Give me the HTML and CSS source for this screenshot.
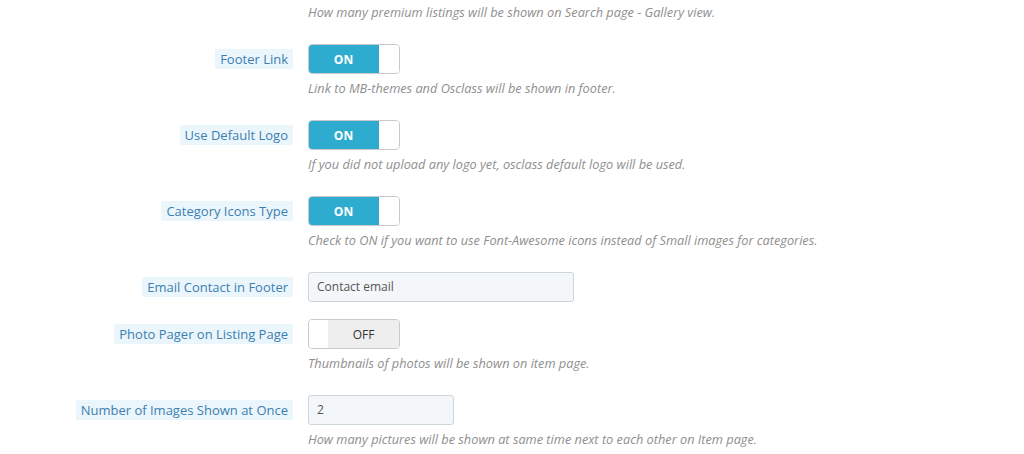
FILE: index.html
```html
<!DOCTYPE html>
<html>
<head>
<meta charset="utf-8">
<link rel="stylesheet" href="styles.css">
</head>
<body>
<div class="form">
  <div class="row row-top">
    <div class="label-col"></div>
    <div class="field"><div class="help">How many premium listings will be shown on Search page - Gallery view.</div></div>
  </div>
  <div class="row">
    <div class="label-col"><span class="label">Footer Link</span></div>
    <div class="field">
      <div class="toggle on"><span class="tg-on">ON</span><span class="tg-knob"></span></div>
      <div class="help">Link to MB-themes and Osclass will be shown in footer.</div>
    </div>
  </div>
  <div class="row">
    <div class="label-col"><span class="label">Use Default Logo</span></div>
    <div class="field">
      <div class="toggle on"><span class="tg-on">ON</span><span class="tg-knob"></span></div>
      <div class="help">If you did not upload any logo yet, osclass default logo will be used.</div>
    </div>
  </div>
  <div class="row">
    <div class="label-col"><span class="label">Category Icons Type</span></div>
    <div class="field">
      <div class="toggle on"><span class="tg-on">ON</span><span class="tg-knob"></span></div>
      <div class="help">Check to ON if you want to use Font-Awesome icons instead of Small images for categories.</div>
    </div>
  </div>
  <div class="row">
    <div class="label-col"><span class="label">Email Contact in Footer</span></div>
    <div class="field">
      <div class="input input-wide">Contact email</div>
    </div>
  </div>
  <div class="row">
    <div class="label-col"><span class="label">Photo Pager on Listing Page</span></div>
    <div class="field">
      <div class="toggle off"><span class="tg-knob"></span><span class="tg-off">OFF</span></div>
      <div class="help">Thumbnails of photos will be shown on item page.</div>
    </div>
  </div>
  <div class="row">
    <div class="label-col"><span class="label">Number of Images Shown at Once</span></div>
    <div class="field">
      <div class="input input-short">2</div>
      <div class="help">How many pictures will be shown at same time next to each other on Item page.</div>
    </div>
  </div>
</div>
</body>
</html>
```

FILE: styles.css
```css
html, body {
  margin: 0;
  padding: 0;
  background: #ffffff;
  font-family: "Open Sans", "Liberation Sans", sans-serif;
}
.form {
  padding-top: 4px;
}
.row {
  display: grid;
  grid-template-columns: 293px 1fr;
  column-gap: 15px;
  margin-bottom: 17px;
}
.label-col {
  display: flex;
  justify-content: flex-end;
  height: 30px;
  align-items: center;
}
.row-top .label-col {
  height: auto;
}
.label {
  display: inline-block;
  background: #ebf5fc;
  color: #3c7fb0;
  font-size: 13px;
  line-height: 19px;
  padding: 1px 5px 0;
  border-radius: 2px;
}
.field {
  display: flex;
  flex-direction: column;
  align-items: flex-start;
}
.help {
  font-style: italic;
  font-size: 12.75px;
  line-height: 16px;
  color: #8f8f8f;
  margin-top: 6px;
  margin-bottom: 7px;
}
.row-top .help {
  margin-top: 0;
}
.toggle {
  display: flex;
  width: 92px;
  height: 30px;
  box-sizing: border-box;
  border: 1px solid #c9c9c9;
  border-radius: 4px;
  overflow: hidden;
  font-size: 12px;
}
.tg-on {
  width: 71px;
  background: #2eacd0;
  color: #ffffff;
  font-weight: 700;
  display: flex;
  align-items: center;
  justify-content: center;
  margin: -1px 0 -1px -1px;
  border-radius: 4px 0 0 4px;
}
.tg-knob {
  flex: 1;
  background: #ffffff;
}
.tg-off {
  width: 71px;
  background: #eeeeee;
  color: #333333;
  display: flex;
  align-items: center;
  justify-content: center;
}
.input {
  height: 30px;
  box-sizing: border-box;
  border: 1px solid #ccd6db;
  border-radius: 3px;
  background: #f3f7f9;
  color: #555555;
  font-size: 12px;
  line-height: 28px;
  padding: 0 8px;
}
.input-wide {
  width: 266px;
}
.input-short {
  width: 146px;
}
```
